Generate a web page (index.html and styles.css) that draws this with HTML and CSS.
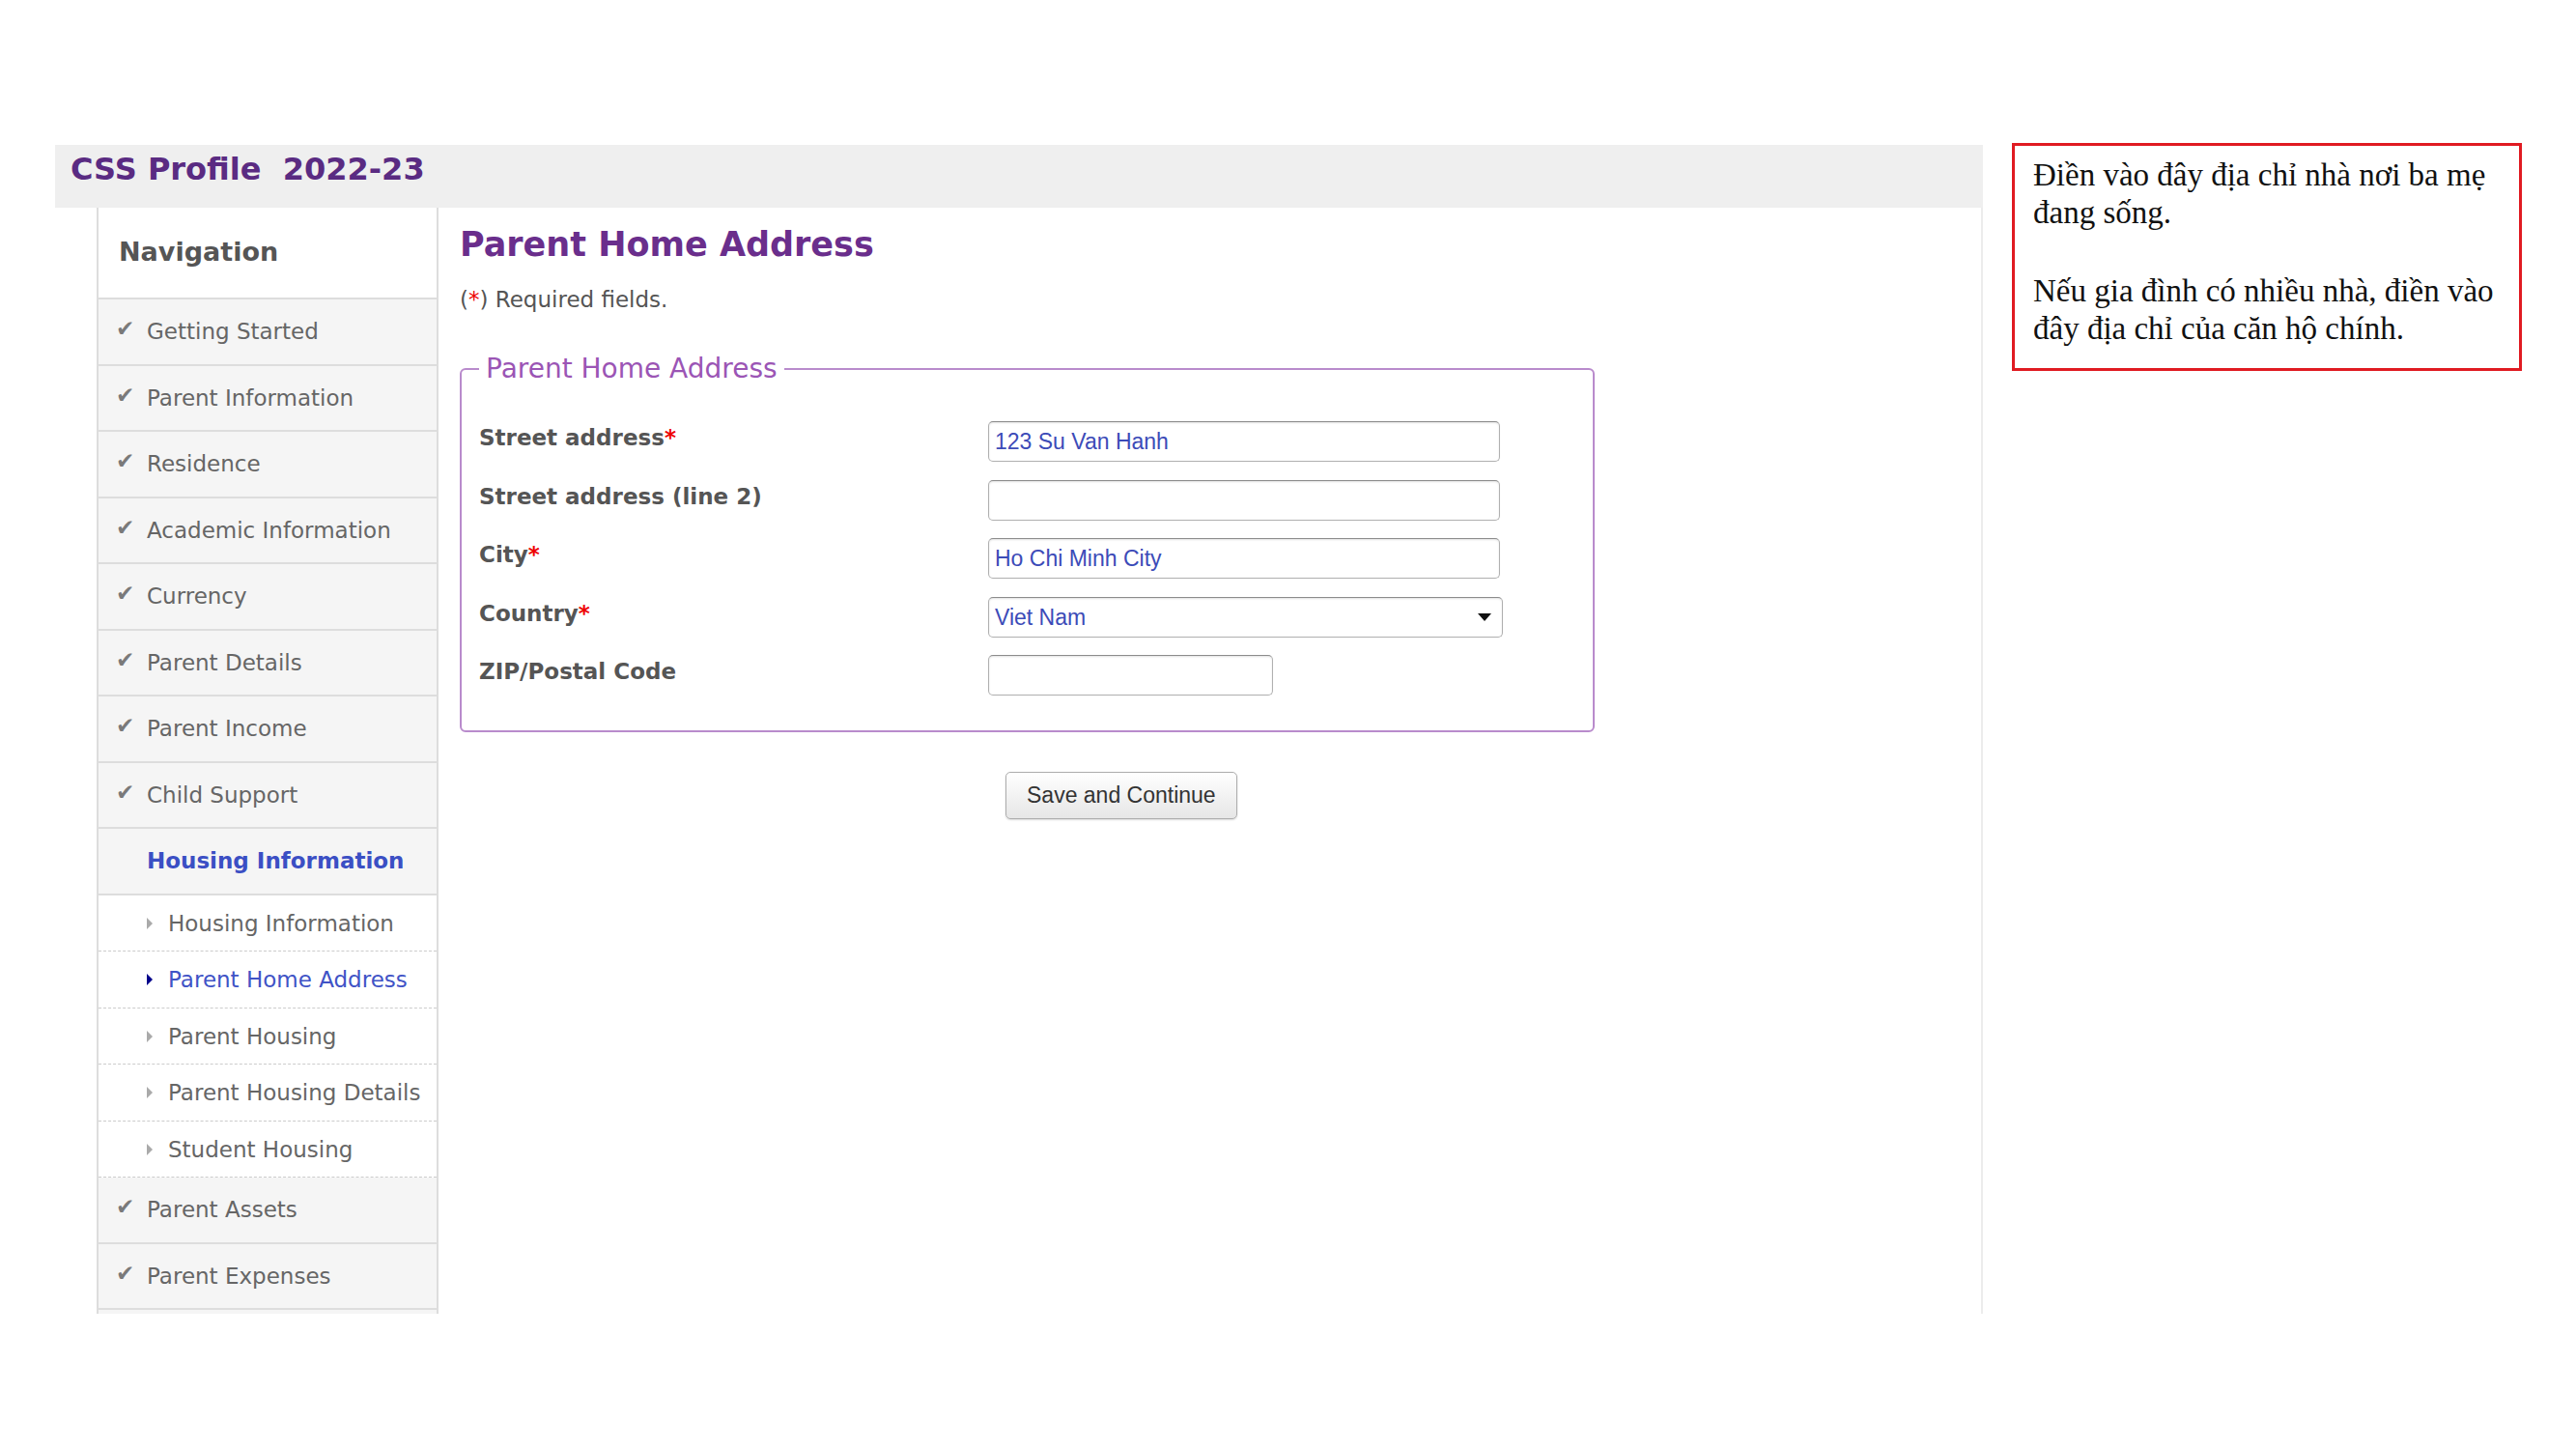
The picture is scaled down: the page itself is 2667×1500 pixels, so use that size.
FILE: index.html
```html
<!DOCTYPE html>
<html lang="en">
    <head>
        <meta charset="UTF-8" />
        <meta name="viewport" content="width=device-width, initial-scale=1.0" />
        <title>CSS Profile 2022-23 - Parent Home Address</title>
        <link rel="stylesheet" href="styles.css">
    </head>
    <body>
        <div class="page">
            <div class="profile">
                <div class="profile-header">CSS Profile&nbsp; 2022-23</div>

                <div class="profile-body">
                    <nav class="sidebar">
                        <div class="nav-title">Navigation</div>
                        <ul class="nav-list">
                            <li class="nav-item"><span class="nav-icon">&#10004;</span>Getting Started</li>
                            <li class="nav-item"><span class="nav-icon">&#10004;</span>Parent Information</li>
                            <li class="nav-item"><span class="nav-icon">&#10004;</span>Residence</li>
                            <li class="nav-item"><span class="nav-icon">&#10004;</span>Academic Information</li>
                            <li class="nav-item"><span class="nav-icon">&#10004;</span>Currency</li>
                            <li class="nav-item"><span class="nav-icon">&#10004;</span>Parent Details</li>
                            <li class="nav-item"><span class="nav-icon">&#10004;</span>Parent Income</li>
                            <li class="nav-item"><span class="nav-icon">&#10004;</span>Child Support</li>
                            <li class="nav-item current"><span class="nav-icon"></span>Housing Information</li>
                            <li class="nav-sub"><span class="nav-arrow"></span>Housing Information</li>
                            <li class="nav-sub active"><span class="nav-arrow"></span>Parent Home Address</li>
                            <li class="nav-sub"><span class="nav-arrow"></span>Parent Housing</li>
                            <li class="nav-sub"><span class="nav-arrow"></span>Parent Housing Details</li>
                            <li class="nav-sub"><span class="nav-arrow"></span>Student Housing</li>
                            <li class="nav-item"><span class="nav-icon">&#10004;</span>Parent Assets</li>
                            <li class="nav-item"><span class="nav-icon">&#10004;</span>Parent Expenses</li>
                        </ul>
                    </nav>

                    <main class="content">
                        <h1>Parent Home Address</h1>
                        <p class="required-note">(<span class="req">*</span>) Required fields.</p>

                        <fieldset class="address-box">
                            <legend>Parent Home Address</legend>
                            <div class="form-grid">
                                <label for="street1">Street address<span class="req">*</span></label>
                                <input class="field" type="text" id="street1" value="123 Su Van Hanh" />

                                <label for="street2">Street address (line 2)</label>
                                <input class="field" type="text" id="street2" />

                                <label for="city">City<span class="req">*</span></label>
                                <input class="field" type="text" id="city" value="Ho Chi Minh City" />

                                <label for="country">Country<span class="req">*</span></label>
                                <div class="select-wrap">
                                    <select class="field" id="country">
                                        <option>Viet Nam</option>
                                    </select>
                                </div>

                                <label for="zip">ZIP/Postal Code</label>
                                <input class="field field-zip" type="text" id="zip" />
                            </div>
                        </fieldset>

                        <div class="actions">
                            <button type="button">Save and Continue</button>
                        </div>
                    </main>
                </div>
            </div>

            <aside class="note">
                <p>Điền vào đây địa chỉ nhà nơi ba mẹ<br>đang sống.</p>
                <p>Nếu gia đình có nhiều nhà, điền vào<br>đây địa chỉ của căn hộ chính.</p>
            </aside>
        </div>
    </body>
</html>
```

FILE: styles.css
```css
body {
    margin: 0;
    background-color: #fff;
    font-family: 'DejaVu Sans', Verdana, sans-serif;
}
.page {
    display: flex;
    align-items: flex-start;
    padding: 148px 0 0 57px;
}
.profile {
    width: 1996px;
    height: 1210px;
    margin-top: 2px;
    overflow: hidden;
    display: flex;
    flex-direction: column;
}
.profile-header {
    height: 65px;
    flex-shrink: 0;
    background-color: #efefef;
    color: #5a2b82;
    font-size: 32px;
    font-weight: bold;
    line-height: 50px;
    padding-left: 16px;
}
.profile-body {
    flex: 1;
    display: flex;
}

/* боковое меню */
.sidebar {
    width: 354px;
    flex-shrink: 0;
    box-sizing: border-box;
    margin-left: 43px;
    border-left: 2px solid #ddd;
    border-right: 2px solid #ddd;
    background-color: #f5f5f5;
}
.nav-title {
    height: 95px;
    box-sizing: border-box;
    padding: 30px 0 0 21px;
    background-color: #fff;
    border-bottom: 2px solid #ddd;
    font-size: 27px;
    font-weight: bold;
    line-height: 32px;
    color: #555;
}
.nav-list {
    list-style: none;
    margin: 0;
    padding: 0;
}
.nav-item {
    height: 68.5px;
    box-sizing: border-box;
    padding: 2px 0 0 18px;
    line-height: 63px;
    border-bottom: 2px solid #ddd;
    font-size: 23px;
    color: #666;
    white-space: nowrap;
}
.nav-icon {
    display: inline-block;
    width: 32px;
    font-size: 23px;
    line-height: 1;
    color: #7a7a7a;
    vertical-align: 3px;
}
.nav-item.current {
    color: #3b4fc4;
    font-weight: bold;
}
.nav-sub {
    height: 58.5px;
    box-sizing: border-box;
    padding: 2px 0 0 50px;
    line-height: 54px;
    background-color: #fff;
    border-bottom: 1px dashed #ccc;
    font-size: 23px;
    color: #666;
    white-space: nowrap;
}
.nav-arrow {
    display: inline-block;
    width: 0;
    height: 0;
    border-left: 6px solid #aaa;
    border-top: 6px solid transparent;
    border-bottom: 6px solid transparent;
    margin-right: 16px;
    vertical-align: 2px;
}
.nav-sub.active {
    color: #4053c6;
}
.nav-sub.active .nav-arrow {
    border-left-color: #00008b;
}

/* основная часть */
.content {
    flex: 1;
    border-right: 2px solid #ececec;
    padding: 18px 0 0 22px;
}
h1 {
    margin: 0;
    font-size: 35px;
    line-height: 40px;
    color: #6a2e8c;
}
.required-note {
    margin: 22px 0 0;
    font-size: 23px;
    line-height: 30px;
    color: #555;
}
.req {
    color: #e00;
}
.address-box {
    width: 1175px;
    box-sizing: border-box;
    margin: 40px 0 0;
    padding: 37px 18px 36px;
    border: 2px solid #b98bcc;
    border-radius: 6px;
}
.address-box legend {
    padding: 0 7px;
    font-size: 28px;
    line-height: 34px;
    color: #9b55b5;
}
.form-grid {
    display: grid;
    grid-template-columns: 527px auto;
    row-gap: 18.5px;
    align-items: start;
    justify-items: start;
}
.form-grid label {
    padding-top: 3px;
    font-size: 23px;
    font-weight: bold;
    line-height: 28px;
    color: #555;
}
.field {
    width: 530px;
    height: 42px;
    box-sizing: border-box;
    margin: 0;
    padding: 0 6px;
    border: 1px solid #b0b0b0;
    border-top-color: #8c8c8c;
    border-radius: 5px;
    box-shadow: inset 0 1px 2px rgba(0, 0, 0, 0.12);
    background-color: #fff;
    font-family: 'Liberation Sans', Arial, sans-serif;
    font-size: 23px;
    color: #3c4bb8;
}
.field-zip {
    width: 295px;
}
.select-wrap {
    position: relative;
    width: 533px;
}
.select-wrap select {
    width: 100%;
    appearance: none;
    -webkit-appearance: none;
}
.select-wrap::after {
    content: '';
    position: absolute;
    right: 12px;
    top: 17px;
    border-left: 7px solid transparent;
    border-right: 7px solid transparent;
    border-top: 8px solid #111;
    pointer-events: none;
}
.actions {
    margin: 41px 0 0 565px;
}
.actions button {
    height: 49px;
    padding: 0 21px;
    border: 1px solid #adadad;
    border-radius: 5px;
    background: linear-gradient(#ffffff, #e6e6e6);
    box-shadow: 0 1px 2px rgba(0, 0, 0, 0.15);
    font-family: 'Liberation Sans', Arial, sans-serif;
    font-size: 23px;
    color: #333;
    cursor: pointer;
}

/* заметка справа */
.note {
    width: 528px;
    height: 236px;
    box-sizing: border-box;
    margin-left: 30px;
    padding: 11px 8px 0 19px;
    border: 3px solid #e01b22;
    font-family: 'Liberation Serif', 'Times New Roman', serif;
    font-size: 33px;
    line-height: 39px;
    color: #111;
}
.note p {
    margin: 0;
}
.note p + p {
    margin-top: 42px;
}
```
